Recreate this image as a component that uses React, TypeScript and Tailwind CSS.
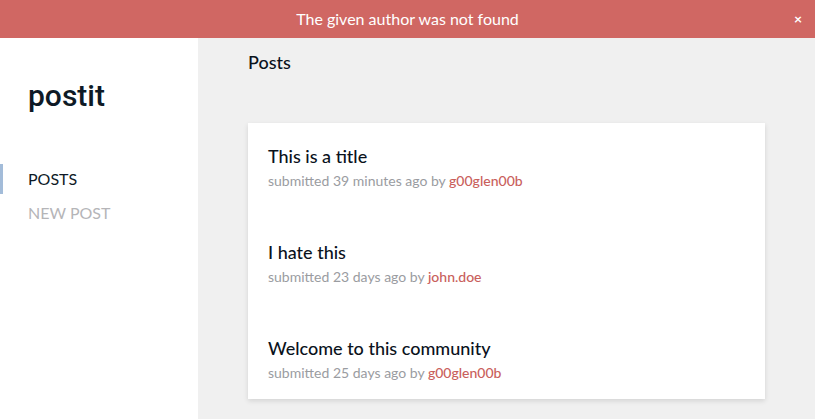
const posts = [
  { title: "This is a title", when: "39 minutes ago", author: "g00glen00b" },
  { title: "I hate this", when: "23 days ago", author: "john.doe" },
  { title: "Welcome to this community", when: "25 days ago", author: "g00glen00b" },
];

export default function App() {
  return (
    <div className="flex h-[419px] w-[815px] flex-col overflow-hidden bg-[#f0f0f0] font-['Lato',sans-serif]">
      {/* error banner */}
      <div className="relative flex h-[38px] shrink-0 items-center justify-center bg-[#d06763] text-[16px] text-white">
        The given author was not found
        <button className="absolute right-[13px] top-[12px] text-[14px] font-bold leading-none text-white">
          ×
        </button>
      </div>

      <div className="flex flex-1">
        <aside className="flex w-[198px] shrink-0 flex-col bg-white pt-[40px]">
          <h1 className="pl-[28px] font-['Roboto',sans-serif] text-[30px] font-medium leading-[36px] text-[#0e1a26]">
            postit
          </h1>
          <nav className="mt-[50px] flex flex-col gap-[4px] text-[16px] leading-[24px]">
            <a className="border-l-[3px] border-[#a3bcd9] py-[3px] pl-[25px] text-[#0e1a26]">POSTS</a>
            <a className="py-[3px] pl-[28px] text-[#b5b5b8]">NEW POST</a>
          </nav>
        </aside>

        <main className="flex-1 px-[50px] pt-[10px]">
          <h2 className="text-[18px] font-medium leading-[28px] text-[#0a121c]">Posts</h2>
          <div className="mt-[47px] flex flex-col gap-[49px] bg-white px-[20px] pb-[16px] pt-[21px] shadow-[0_2px_5px_rgba(0,0,0,0.12)]">
            {posts.map((p) => (
              <div key={p.title}>
                <div className="text-[18px] font-medium leading-[24px] text-[#0a121c]">{p.title}</div>
                <div className="mt-[3px] text-[14px] leading-[20px] text-[#9a9ca1]">
                  submitted {p.when} by{" "}
                  <a className="font-medium text-[#c9605c]">{p.author}</a>
                </div>
              </div>
            ))}
          </div>
        </main>
      </div>
    </div>
  );
}
